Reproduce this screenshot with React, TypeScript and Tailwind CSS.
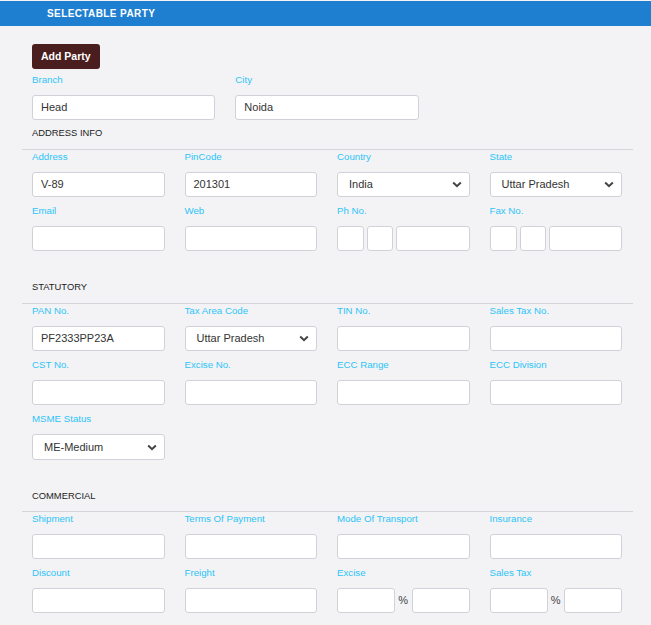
import type { ReactNode } from 'react';

const FONT = { fontFamily: '"Liberation Sans", Arial, sans-serif' };

function Label({ children }: { children: ReactNode }) {
  return <p className="mb-[9px] text-[9.7px] leading-[12px] text-[#2cc4f7]">{children}</p>;
}

function Box({ value = '', className = '' }: { value?: string; className?: string }) {
  return (
    <div
      className={`flex h-[25px] items-center rounded-[3px] border border-[#cfd3d9] bg-white pl-[8px] text-[11px] text-[#333] ${className}`}
    >
      {value}
    </div>
  );
}

function Select({ value, tall }: { value: string; tall?: boolean }) {
  return (
    <div
      className={`flex items-center justify-between rounded-[3px] border border-[#cfd3d9] bg-white pl-[11px] pr-[7px] text-[11px] text-[#333] ${tall ? 'h-[26px]' : 'h-[25px]'}`}
    >
      <span>{value}</span>
      <svg width="10" height="7" viewBox="0 0 10 7">
        <path d="M1.2 1.5 L5 5.2 L8.8 1.5" fill="none" stroke="#444" strokeWidth="2" />
      </svg>
    </div>
  );
}

function Field({ label, children }: { label: string; children: ReactNode }) {
  return (
    <div>
      <Label>{label}</Label>
      {children}
    </div>
  );
}

function Section({ title, first, last }: { title: string; first?: boolean; last?: boolean }) {
  return (
    <div className={first ? 'mt-[7px]' : 'mt-[30px]'}>
      <p className="px-[32px] text-[9.4px] leading-[12px] text-[#222]">{title}</p>
      <div
        className={`mb-[1px] ml-[22px] mr-[18px] h-px bg-[#d3d5d9] ${last ? 'mt-[9px]' : 'mt-[10px]'}`}
      />
    </div>
  );
}

function Split() {
  return (
    <div className="flex gap-[3px]">
      <Box className="w-[27px]" />
      <Box className="w-[26px]" />
      <Box className="flex-1" />
    </div>
  );
}

function Percent() {
  return (
    <div className="flex items-center">
      <Box className="w-[58px]" />
      <span className="flex-1 text-center text-[11px] text-[#444]">%</span>
      <Box className="w-[58px]" />
    </div>
  );
}

const grid4 = 'grid grid-cols-4 gap-x-[20px] gap-y-[8px] pl-[32px] pr-[29px]';

export default function App() {
  return (
    <div className="min-h-[625px] bg-[#f3f3f6] pt-px" style={FONT}>
      <div className="flex h-[25px] items-center bg-[#1e7fd0] pl-[47px]">
        <span className="text-[10px] font-bold tracking-[0.4px] text-white">SELECTABLE PARTY</span>
      </div>

      <div className="pl-[32px] pr-[29px] pt-[18px]">
        <button className="block h-[25px] rounded-[3px] bg-[#4a1e1e] px-[9px] text-[10.5px] font-bold text-white">
          Add Party
        </button>
        <div className="mt-[5px] grid grid-cols-3 gap-x-[20px]">
          <Field label="Branch">
            <Box value="Head" />
          </Field>
          <Field label="City">
            <Box value="Noida" />
          </Field>
        </div>
      </div>

      <Section title="ADDRESS INFO" first />
      <div className={grid4}>
        <Field label="Address">
          <Box value="V-89" />
        </Field>
        <Field label="PinCode">
          <Box value="201301" />
        </Field>
        <Field label="Country">
          <Select value="India" />
        </Field>
        <Field label="State">
          <Select value="Uttar Pradesh" />
        </Field>
        <Field label="Email">
          <Box />
        </Field>
        <Field label="Web">
          <Box />
        </Field>
        <Field label="Ph No.">
          <Split />
        </Field>
        <Field label="Fax No.">
          <Split />
        </Field>
      </div>

      <Section title="STATUTORY" />
      <div className={grid4}>
        <Field label="PAN No.">
          <Box value="PF2333PP23A" />
        </Field>
        <Field label="Tax Area Code">
          <Select value="Uttar Pradesh" />
        </Field>
        <Field label="TIN No.">
          <Box />
        </Field>
        <Field label="Sales Tax No.">
          <Box />
        </Field>
        <Field label="CST No.">
          <Box />
        </Field>
        <Field label="Excise No.">
          <Box />
        </Field>
        <Field label="ECC Range">
          <Box />
        </Field>
        <Field label="ECC Division">
          <Box />
        </Field>
        <Field label="MSME Status">
          <Select value="ME-Medium" tall />
        </Field>
      </div>

      <Section title="COMMERCIAL" last />
      <div className={grid4}>
        <Field label="Shipment">
          <Box />
        </Field>
        <Field label="Terms Of Payment">
          <Box />
        </Field>
        <Field label="Mode Of Transport">
          <Box />
        </Field>
        <Field label="Insurance">
          <Box />
        </Field>
        <Field label="Discount">
          <Box />
        </Field>
        <Field label="Freight">
          <Box />
        </Field>
        <Field label="Excise">
          <Percent />
        </Field>
        <Field label="Sales Tax">
          <Percent />
        </Field>
      </div>
    </div>
  );
}
